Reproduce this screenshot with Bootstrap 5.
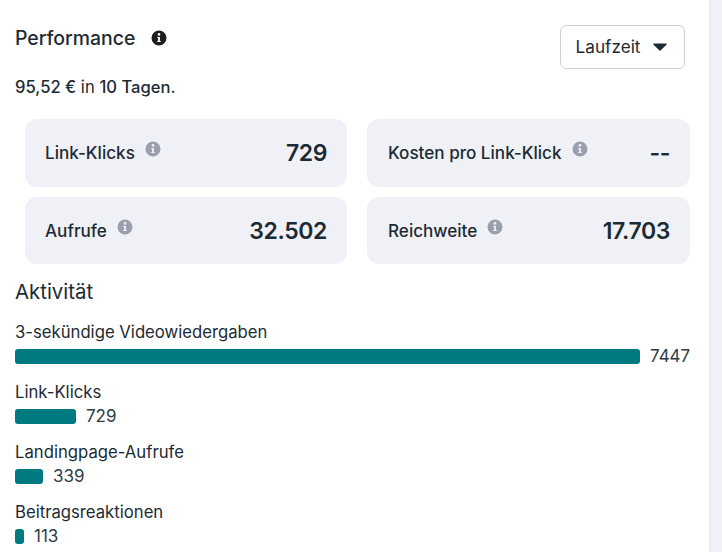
<!doctype html>
<html lang="de"><head><meta charset="utf-8"><title>Performance</title>
<link rel="stylesheet" href="https://cdn.jsdelivr.net/npm/bootstrap@5.3.0/dist/css/bootstrap.min.css">
<style>
html,body{height:100%}
body{background:#f0f1f6;overflow:hidden;font-family:Inter,"Noto Sans",sans-serif;color:#1c2b33}
.panel-main{width:710px;height:552px;background:#fff;padding:25px 20px 0 15px;border-right:1px solid #e9eaef;overflow:hidden}
.head-row{height:44px}
.perf-title{font-size:19.4px;font-weight:500;line-height:26px;margin:0}
.ico-i{width:16px;height:16px;display:block;flex:none}
.dark-i{color:#1c1e21;margin-left:16px}
.grey-i{color:#9a9fad;margin-left:10px;margin-top:-8px}
.range-btn{font-size:17.2px;height:44px;width:125px;margin-right:4px;padding:0 2px 0 0;border:1px solid #cbd2d9;border-radius:6px;color:#1c2b33;background:#fff}
.caret-ico{width:14px;height:8px;margin-left:13px}
.spend-line{font-size:16.6px;font-weight:400;margin:7px 0 0;line-height:22px}
.spend-line b{font-weight:500}
.stat-grid{display:grid;grid-template-columns:322px 323px;grid-template-rows:68px 67px;column-gap:20px;row-gap:10px;margin:21px 0 0 10px}
.stat-box{background:#f0f1f6;border-radius:12px;padding:0 20px;display:flex;align-items:center}
.stat-box:nth-child(even){padding-left:21px}
.stat-label{font-size:17.1px;font-weight:500;line-height:24px}
.stat-val{font-size:23px;font-weight:600;margin-left:auto;line-height:30px;letter-spacing:-.4px}
.section-name{font-size:20.4px;font-weight:400;line-height:26px;margin:15px 0 0}
.act-list{margin:0;padding:0;list-style:none}
.act-item{margin-top:11px}
.act-item:first-child{margin-top:15px}
.act-label{font-size:16.7px;line-height:24px;display:block}
.act-row{display:flex;align-items:center;gap:10px;height:25px;font-size:17px;color:#2f3d46}
.act-bar{height:15px;background:#007a80;border-radius:3px;flex:none}
</style></head><body>
<svg width="0" height="0" class="d-block position-absolute"><defs><symbol id="info" viewBox="0 0 16 16"><path fill="currentColor" fill-rule="evenodd" d="M8 .5a7.5 7.5 0 1 1 0 15 7.5 7.5 0 0 1 0-15zM8 3a1.4 1.4 0 1 0 0 2.8A1.4 1.4 0 0 0 8 3zM6.2 7v1.1h.9v2.9h-.9v1.1h3.6V11h-.9V7z"/></symbol></defs></svg>
<main class="panel-main">
<div class="d-flex justify-content-between head-row">
<div class="d-flex align-items-center align-self-start"><h2 class="perf-title">Performance</h2><svg class="ico-i dark-i"><use href="#info"/></svg></div>
<button type="button" class="btn range-btn d-flex align-items-center justify-content-center">Laufzeit<svg class="caret-ico" viewBox="0 0 14 8"><path fill="#1c2b33" d="M.8.5h12.4c.6 0 .9.7.5 1.1L7.5 7.4a.7.7 0 0 1-1 0L.3 1.6C-.1 1.2.2.5.8.5z"/></svg></button>
</div>
<p class="spend-line"><b>95,52 €</b> in <b>10 Tagen.</b></p>
<div class="stat-grid">
<div class="stat-box"><span class="stat-label">Link-Klicks</span><svg class="ico-i grey-i"><use href="#info"/></svg><span class="stat-val">729</span></div>
<div class="stat-box"><span class="stat-label">Kosten pro Link-Klick</span><svg class="ico-i grey-i"><use href="#info"/></svg><span class="stat-val">--</span></div>
<div class="stat-box"><span class="stat-label">Aufrufe</span><svg class="ico-i grey-i"><use href="#info"/></svg><span class="stat-val">32.502</span></div>
<div class="stat-box"><span class="stat-label">Reichweite</span><svg class="ico-i grey-i"><use href="#info"/></svg><span class="stat-val">17.703</span></div>
</div>
<h3 class="section-name">Aktivität</h3>
<ul class="act-list">
<li class="act-item"><span class="act-label">3-sekündige Videowiedergaben</span><div class="act-row"><div class="act-bar" style="width:625px"></div>7447</div></li>
<li class="act-item"><span class="act-label">Link-Klicks</span><div class="act-row"><div class="act-bar" style="width:61px"></div>729</div></li>
<li class="act-item"><span class="act-label">Landingpage-Aufrufe</span><div class="act-row"><div class="act-bar" style="width:28px"></div>339</div></li>
<li class="act-item"><span class="act-label">Beitragsreaktionen</span><div class="act-row"><div class="act-bar" style="width:9px"></div>113</div></li>
</ul>
</main>
<script src="https://cdn.jsdelivr.net/npm/bootstrap@5.3.0/dist/js/bootstrap.bundle.min.js"></script>
</body></html>
